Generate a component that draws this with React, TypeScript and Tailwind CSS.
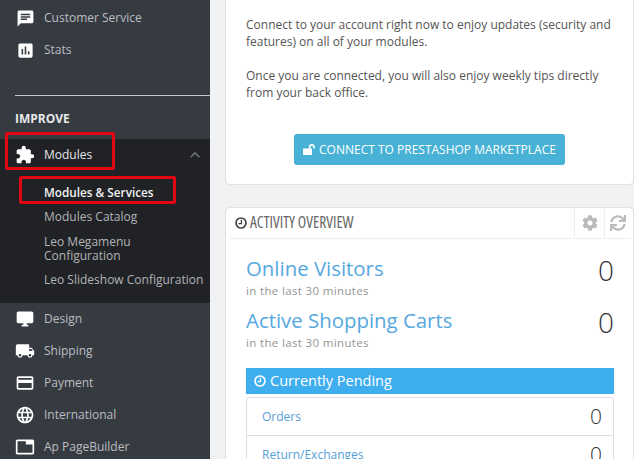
import React from 'react';
import { FaCog, FaSync } from 'react-icons/fa';
import {
  MdAssessment,
  MdChat,
  MdCreditCard,
  MdDesktopWindows,
  MdExtension,
  MdKeyboardArrowUp,
  MdLanguage,
  MdLocalShipping,
  MdTab,
} from 'react-icons/md';

const ClockIcon: React.FC<{ className?: string }> = ({ className }) => (
  <svg width="12" height="12" viewBox="0 0 12 12" fill="none" stroke="currentColor" className={className}>
    <circle cx="6" cy="6" r="5" strokeWidth="1.7" />
    <path d="M6.4 2.8V6.6H3.4" strokeWidth="1.3" />
  </svg>
);

const UnlockIcon: React.FC = () => (
  <svg width="13" height="11" viewBox="0 0 13 11" fill="none">
    <rect x="0" y="4.5" width="9" height="6.5" rx="0.8" fill="currentColor" />
    <path d="M6.6 5V3.2a2.3 2.3 0 0 1 4.6 0V4.6" stroke="currentColor" strokeWidth="1.6" />
  </svg>
);

const NavRow: React.FC<{ icon: React.ReactNode; label: string }> = ({ icon, label }) => (
  <div className="flex h-8 items-center text-[12px] text-[#bcbec1]">
    <span className="flex w-[44px] justify-center pl-[6px] text-white">{icon}</span>
    <span>{label}</span>
  </div>
);

const Stat: React.FC<{ title: string }> = ({ title }) => (
  <div className="flex h-[52px] items-start justify-between pr-[19px]">
    <div>
      <div className="text-[20.4px] leading-[26px] text-[#55a8e0]">{title}</div>
      <div className="text-[11.5px] leading-[19px] tracking-[0.35px] text-[#959595]">in the last 30 minutes</div>
    </div>
    <div className="text-[28px] font-light leading-[30px] text-[#333]">0</div>
  </div>
);

const PendingRow: React.FC<{ label: string; border?: boolean }> = ({ label, border }) => (
  <div className={`flex items-center justify-between pl-[15px] pr-[11px] ${border ? 'h-[38px] border-t border-[#ddd]' : 'h-[37px]'}`}>
    <span className="text-[12px] text-[#55a0d8]">{label}</span>
    <span className="pt-[1px] text-[21px] font-light text-[#333]">0</span>
  </div>
);

const App: React.FC = () => {
  return (
    <div className="relative flex h-[459px] w-[634px] overflow-hidden bg-[#eff1f2] font-['Open_Sans',sans-serif]">
      <aside className="w-[210px] shrink-0 bg-[#363a41] pt-[2px]">
        <NavRow icon={<MdChat size={19} />} label="Customer Service" />
        <NavRow icon={<MdAssessment size={19} />} label="Stats" />
        <div className="ml-[15px] mt-[29px] border-t border-[#c4c7ca]" />
        <div className="mt-[14px] h-[29px] pl-[15px] text-[12px] font-bold leading-[18px] text-[#e8e9ea]">IMPROVE</div>
        <div className="h-[164px] bg-[#202226]">
          <div className="flex h-8 items-center text-[12px] text-[#e6e6e7]">
            <span className="flex w-[44px] justify-center pl-[6px] text-white"><MdExtension size={20} /></span>
            <span className="flex-1">Modules</span>
            <MdKeyboardArrowUp size={20} className="mr-[5px] text-[#6c6f73]" />
          </div>
          <div className="pl-[44px] pt-[11px] text-[12px] text-[#b2b4b6]">
            <div className="h-[23px] text-[11.75px] font-semibold leading-[20px] text-[#f2f2f2]">Modules &amp; Services</div>
            <div className="h-[24px] leading-[24px]">Modules Catalog</div>
            <div className="pt-[6px] leading-[14px]">Leo Megamenu<br />Configuration</div>
            <div className="whitespace-nowrap pt-[8px] leading-[18px]">Leo Slideshow Configuration</div>
          </div>
        </div>
        <NavRow icon={<MdDesktopWindows size={20} />} label="Design" />
        <NavRow icon={<MdLocalShipping size={20} />} label="Shipping" />
        <NavRow icon={<MdCreditCard size={20} />} label="Payment" />
        <NavRow icon={<MdLanguage size={20} />} label="International" />
        <NavRow icon={<MdTab size={20} />} label="Ap PageBuilder" />
      </aside>

      <main className="min-w-0 flex-1 pl-[15px]">
        <section className="h-[185px] rounded-b-[5px] border-x border-b border-[#dfe1e3] bg-white pl-[20px] text-[12px] leading-[17px] text-[#555]">
          <p className="pt-[16px]">Connect to your account right now to enjoy updates (security and<br />features) on all of your modules.</p>
          <p className="pt-[17px]">Once you are connected, you will also enjoy weekly tips directly<br />from your back office.</p>
          <div className="ml-[48px] mt-[33px] flex h-[31px] w-[271px] items-center justify-center gap-[3px] whitespace-nowrap rounded-[3px] bg-[#47b2d6] text-[12px] text-white">
            <UnlockIcon />
            <span>CONNECT TO PRESTASHOP MARKETPLACE</span>
          </div>
        </section>

        <section className="mt-[22px] h-[260px] rounded-t-[5px] border-x border-t border-[#dfe1e3] bg-white pl-[20px]">
          <header className="-ml-[16px] mr-[2px] flex h-[31px] items-center border-b border-[#eee] pl-[5px]">
            <ClockIcon className="text-[#444]" />
            <span className="ml-[3px] flex-1 text-[15.5px] text-[#666] [font-stretch:75%]">ACTIVITY OVERVIEW</span>
            <span className="flex h-full w-[30px] items-center justify-center border-l border-[#eee] text-[#bbb]"><FaCog size={16} /></span>
            <span className="flex h-full w-[27px] items-center justify-center border-l border-[#eee] text-[#bbb]"><FaSync size={16} /></span>
          </header>
          <div className="mt-[16px]">
            <Stat title="Online Visitors" />
            <Stat title="Active Shopping Carts" />
          </div>
          <div className="mr-[19px] mt-[9px] flex h-[26px] items-center gap-1 bg-[#3eaeef] pl-[8px] text-[14.5px] font-medium text-white">
            <ClockIcon />
            <span>Currently Pending</span>
          </div>
          <div className="mr-[19px] mt-[3px] rounded-[3px] border border-[#ddd]">
            <PendingRow label="Orders" />
            <PendingRow label="Return/Exchanges" border />
          </div>
        </section>
      </main>

      <div className="absolute left-[5px] top-[132px] h-[38px] w-[110px] rounded-[2px] border-[3px] border-[#e30613]" />
      <div className="absolute left-[19px] top-[176px] h-[28px] w-[157px] rounded-[2px] border-[3px] border-[#e30613]" />
    </div>
  );
};

export default App;
